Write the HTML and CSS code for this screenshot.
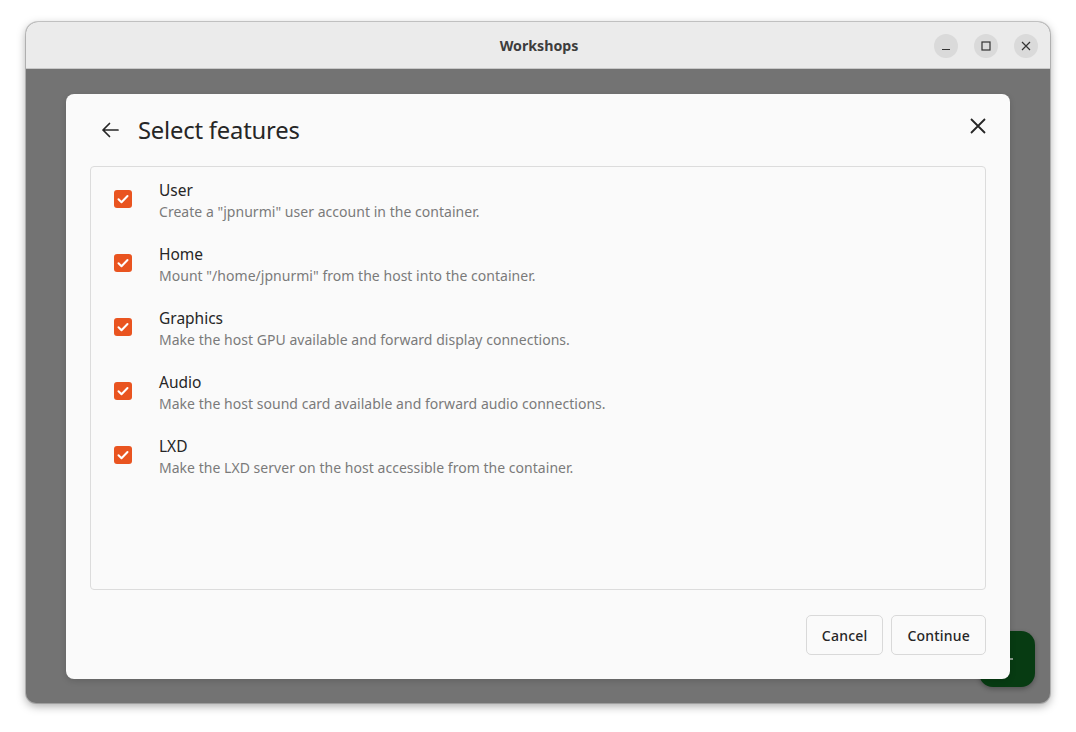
FILE: index.html
```html
<!DOCTYPE html>
<html>
<head>
<meta charset="utf-8">
<link rel="stylesheet" href="styles.css">
</head>
<body>
<div class="window">
  <div class="titlebar">
    <div class="wtitle">Workshops</div>
    <div class="wcontrols">
      <span class="wbtn"><svg width="10" height="10" viewBox="0 0 10 10"><path d="M1 8.5h8" stroke="#333" stroke-width="1.2" fill="none"/></svg></span>
      <span class="wbtn"><svg width="10" height="10" viewBox="0 0 10 10"><rect x="1" y="1" width="8" height="8" stroke="#333" stroke-width="1.2" fill="none"/></svg></span>
      <span class="wbtn"><svg width="10" height="10" viewBox="0 0 10 10"><path d="M1 1l8 8M9 1l-8 8" stroke="#333" stroke-width="1.2" fill="none"/></svg></span>
    </div>
  </div>
  <div class="content">
    <div class="fab"><span class="fabplus"></span></div>
    <div class="dialog">
      <div class="dhead">
        <span class="back"><svg width="20" height="20" viewBox="0 0 20 20"><path d="M18 10H3M9.5 3.5L3 10l6.5 6.5" stroke="#262626" stroke-width="1.7" fill="none" stroke-linecap="round" stroke-linejoin="round"/></svg></span>
        <h1 class="dtitle">Select features</h1>
        <span class="close"><svg width="18" height="18" viewBox="0 0 18 18"><path d="M2 2l14 14M16 2L2 16" stroke="#262626" stroke-width="1.8" fill="none"/></svg></span>
      </div>
      <div class="list">
        <div class="row">
          <span class="check"><svg width="18" height="18" viewBox="0 0 18 18"><path d="M4.5 9.3l3 3 6-6.3" stroke="#fff" stroke-width="2" fill="none" stroke-linecap="round" stroke-linejoin="round"/></svg></span>
          <div class="texts"><div class="rtitle">User</div><div class="rsub">Create a "jpnurmi" user account in the container.</div></div>
        </div>
        <div class="row">
          <span class="check"><svg width="18" height="18" viewBox="0 0 18 18"><path d="M4.5 9.3l3 3 6-6.3" stroke="#fff" stroke-width="2" fill="none" stroke-linecap="round" stroke-linejoin="round"/></svg></span>
          <div class="texts"><div class="rtitle">Home</div><div class="rsub">Mount "/home/jpnurmi" from the host into the container.</div></div>
        </div>
        <div class="row">
          <span class="check"><svg width="18" height="18" viewBox="0 0 18 18"><path d="M4.5 9.3l3 3 6-6.3" stroke="#fff" stroke-width="2" fill="none" stroke-linecap="round" stroke-linejoin="round"/></svg></span>
          <div class="texts"><div class="rtitle">Graphics</div><div class="rsub">Make the host GPU available and forward display connections.</div></div>
        </div>
        <div class="row">
          <span class="check"><svg width="18" height="18" viewBox="0 0 18 18"><path d="M4.5 9.3l3 3 6-6.3" stroke="#fff" stroke-width="2" fill="none" stroke-linecap="round" stroke-linejoin="round"/></svg></span>
          <div class="texts"><div class="rtitle">Audio</div><div class="rsub">Make the host sound card available and forward audio connections.</div></div>
        </div>
        <div class="row">
          <span class="check"><svg width="18" height="18" viewBox="0 0 18 18"><path d="M4.5 9.3l3 3 6-6.3" stroke="#fff" stroke-width="2" fill="none" stroke-linecap="round" stroke-linejoin="round"/></svg></span>
          <div class="texts"><div class="rtitle">LXD</div><div class="rsub">Make the LXD server on the host accessible from the container.</div></div>
        </div>
      </div>
      <div class="actions">
        <button class="btn">Cancel</button>
        <button class="btn">Continue</button>
      </div>
    </div>
  </div>
</div>
</body>
</html>
```
FILE: styles.css
```css
* { box-sizing: border-box; }
html, body { margin: 0; padding: 0; background: #ffffff; }
body {
  font-family: "Noto Sans", "Open Sans", sans-serif;
  width: 1076px;
  height: 732px;
  overflow: hidden;
  padding: 22px 26px 0 26px;
}
.window {
  width: 1024px;
  height: 681px;
  border-radius: 12px 12px 10px 10px;
  overflow: hidden;
  background: #737373;
  box-shadow: 0 3px 10px rgba(0,0,0,0.35), 0 0 0 1px rgba(0,0,0,0.18);
  display: flex;
  flex-direction: column;
}
.titlebar {
  height: 47px;
  flex: none;
  background: #ebebeb;
  border-bottom: 1px solid #c8c8c8;
  position: relative;
  display: flex;
  align-items: center;
  justify-content: center;
}
.wtitle {
  font-weight: 700;
  font-size: 14.2px;
  color: #3d3d3d;
  margin-left: 2px;
}
.wcontrols {
  position: absolute;
  right: 12px;
  top: 12px;
  display: flex;
  gap: 16px;
}
.wbtn {
  width: 24px;
  height: 24px;
  border-radius: 50%;
  background: #dadada;
  display: flex;
  align-items: center;
  justify-content: center;
}
.content {
  flex: 1;
  position: relative;
  padding: 25px 40px 0 40px;
}
.fab {
  position: absolute;
  left: 953px;
  top: 562px;
  width: 56px;
  height: 56px;
  border-radius: 14px;
  background: #073b12;
  box-shadow: 0 2px 5px rgba(0,0,0,0.3);
}
.fabplus {
  position: absolute;
  left: 26px;
  top: 27px;
  width: 8px;
  height: 2px;
  background: #8a9a8c;
}
.dialog {
  position: relative;
  width: 944px;
  height: 585px;
  background: #fafafa;
  border-radius: 8px;
  padding: 0 24px 24px 24px;
  display: flex;
  flex-direction: column;
  box-shadow: 0 2px 6px rgba(0,0,0,0.15);
}
.dhead {
  height: 72px;
  display: flex;
  align-items: center;
  position: relative;
}
.back {
  width: 20px;
  height: 20px;
  margin-left: 10px;
  margin-right: 18px;
  margin-top: -1px;
  display: flex;
}
.dtitle {
  margin: 0;
  font-weight: 400;
  font-size: 23.8px;
  color: #262626;
  letter-spacing: -0.2px;
}
.close {
  position: absolute;
  right: -1px;
  top: 23px;
  width: 18px;
  height: 18px;
  display: flex;
}
.list {
  flex: 1;
  border: 1px solid #dcdcdc;
  border-radius: 4px;
  padding-top: 8px;
  background: #fafafa;
}
.row {
  height: 64px;
  display: flex;
  align-items: flex-start;
  padding-left: 23px;
}
.check {
  width: 18px;
  height: 18px;
  border-radius: 3px;
  background: #e95420;
  display: flex;
  flex: none;
  margin-top: 15px;
}
.texts {
  margin-left: 27px;
  margin-top: 5px;
}
.rtitle {
  font-size: 15.5px;
  line-height: 20px;
  color: #262626;
}
.rsub {
  font-size: 14px;
  line-height: 24px;
  color: #7a7a7a;
  letter-spacing: 0.03px;
}
.actions {
  display: flex;
  justify-content: flex-end;
  gap: 8px;
  margin-top: 25px;
}
.btn {
  height: 40px;
  padding: 0 15px;
  font-family: "Noto Sans", "Open Sans", sans-serif;
  font-size: 14px;
  color: #262626;
  background: #fafafa;
  border: 1px solid #d9d9d9;
  border-radius: 5px;
  font-weight: 500;
  letter-spacing: 0.2px;
}
```
